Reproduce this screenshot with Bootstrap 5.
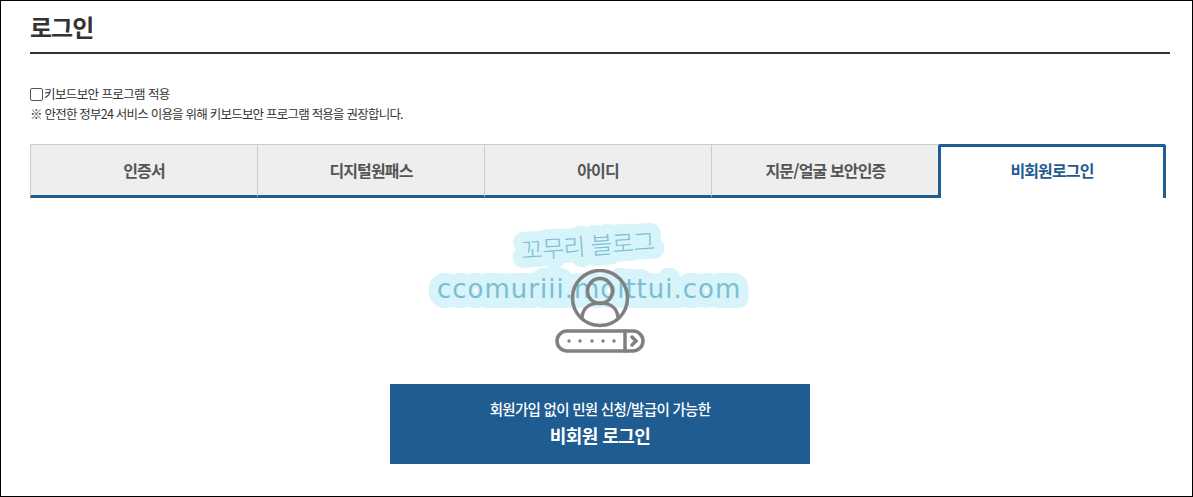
<!DOCTYPE html>
<html lang="ko">
<head>
    <meta charset="UTF-8">
    <title>로그인</title>
    <link href="https://cdn.jsdelivr.net/npm/bootstrap@5.3.0/dist/css/bootstrap.min.css" rel="stylesheet">
    <style>
        html, body { height: 100%; overflow: hidden; }
        body { font-family: "Noto Sans CJK KR", "Noto Sans", sans-serif; color: #333; background: #fff; }
        .frame { height: 497px; border: 1px solid #000; padding: 0 22px 0 29px; position: relative; }
        .page-title { font-size: 24px; font-weight: 700; line-height: 34px; letter-spacing: -1px; color: #333; margin: 9px 0 0; padding-bottom: 8px; border-bottom: 2px solid #333; }
        .sec-opt { margin-top: 30px; font-size: 12.5px; line-height: 20px; color: #333; }
        .opt-check { letter-spacing: -.6px; }
        .opt-note { letter-spacing: -.78px; }
        .sec-opt input { width: 13px; height: 13px; margin: 0 1px 0 0; border: 1px solid #555; border-radius: 2px; appearance: none; display: block; }
        .tab-row { margin-top: 20px; height: 54px; width: 1136px; }
        .tab-item { width: 227px; flex: none; border: 1px solid #ccc; border-left-width: 0; border-bottom: 3px solid #1f5c92; background: #eee; color: #555; font-size: 16px; font-weight: 700; letter-spacing: -.85px; padding-bottom: 1px; }
        .tab-item:first-child { border-left-width: 1px; width: 228px; }
        .tab-item.on { width: 228px; background: #fff; color: #1f5c92; border: 3px solid #1f5c92; border-bottom: 0; border-radius: 3px 3px 0 0; padding-bottom: 6px; margin-left: -1px; }
        .tab-item.before-on { border-right: 0; }
        .icon-zone { height: 186px; position: relative; }
        .mark-svg { position: absolute; left: 385px; top: 16px; }
        .mark-svg text { paint-order: stroke; stroke: #d6f4f9; stroke-width: 20px; stroke-linejoin: round; fill: #7dbdd3; }
        .mark-ko { font-weight: 300; }
        .pw-icon { position: absolute; left: 525px; top: 71px; }
        .go-btn { width: 420px; height: 80px; margin-left: 360px; background: #1f5c92; color: #fff; border: 0; border-radius: 0; padding: 0; display: flex; flex-direction: column; align-items: center; justify-content: center; }
        .go-btn:hover { background: #1f5c92; color: #fff; }
        .go-sub { font-size: 14.5px; font-weight: 500; letter-spacing: -.7px; line-height: 20px; margin-bottom: 1px; }
        .go-main { font-size: 18px; font-weight: 700; letter-spacing: -.55px; line-height: 30px; }
    </style>
</head>
<body>
    <div class="frame">
        <h1 class="page-title">로그인</h1>

        <div class="sec-opt">
            <label class="opt-check d-flex align-items-center"><input type="checkbox">키보드보안 프로그램 적용</label>
            <div class="opt-note">※ 안전한 정부24 서비스 이용을 위해 키보드보안 프로그램 적용을 권장합니다.</div>
        </div>

        <div class="tab-row d-flex">
            <div class="tab-item d-flex align-items-center justify-content-center">인증서</div>
            <div class="tab-item d-flex align-items-center justify-content-center">디지털원패스</div>
            <div class="tab-item d-flex align-items-center justify-content-center">아이디</div>
            <div class="tab-item before-on d-flex align-items-center justify-content-center">지문/얼굴 보안인증</div>
            <div class="tab-item on d-flex align-items-center justify-content-center">비회원로그인</div>
        </div>

        <div class="icon-zone">
            <svg class="mark-svg" width="350" height="100">
                <text class="mark-ko" x="106" y="41" font-size="24" transform="rotate(-4 170 35)" font-family="'Noto Sans CJK KR', sans-serif" letter-spacing="-.8">꼬무리 블로그</text>
                <text x="22" y="84" font-size="26" font-family="'DejaVu Sans', sans-serif" letter-spacing="1">ccomuriii.moittui.com</text>
            </svg>
            <svg class="pw-icon" width="100" height="90" viewBox="0 0 100 90" fill="none" stroke="#808080" stroke-width="3.5" stroke-linecap="round">
                <circle cx="45" cy="29" r="27.5"></circle>
                <circle cx="45" cy="22" r="12.5"></circle>
                <path d="M27 48c1-9 8-14 18-14s17 5 18 14"></path>
                <rect x="2" y="62" width="86" height="20" rx="10"></rect>
                <path d="M70 62v20"></path>
                <path d="M77 68l4 4-4 4"></path>
                <g fill="#808080" stroke="none">
                    <circle cx="14" cy="72" r="1.7"></circle>
                    <circle cx="25" cy="72" r="1.7"></circle>
                    <circle cx="37" cy="72" r="1.7"></circle>
                    <circle cx="48" cy="72" r="1.7"></circle>
                    <circle cx="59" cy="72" r="1.7"></circle>
                </g>
            </svg>
        </div>

        <button type="button" class="btn go-btn">
            <span class="go-sub">회원가입 없이 민원 신청/발급이 가능한</span>
            <span class="go-main">비회원 로그인</span>
        </button>
    </div>
</body>
</html>
